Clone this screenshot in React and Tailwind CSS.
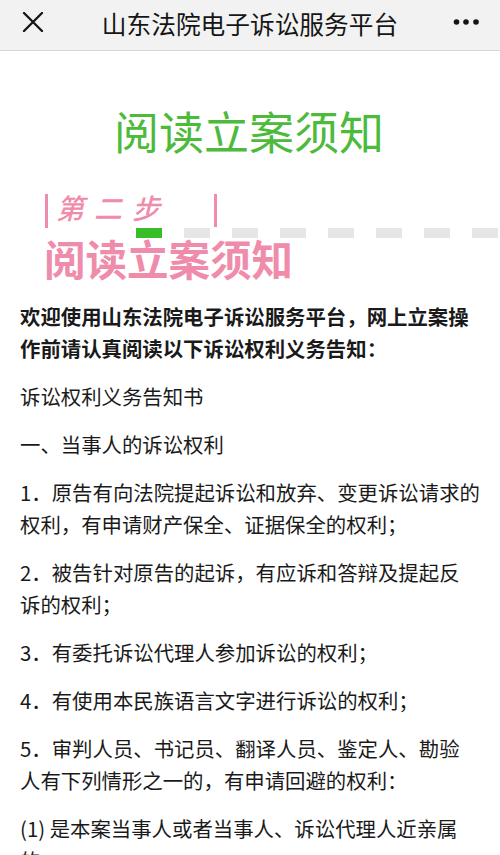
import React from "react";

const paras = [
  { lines: ["欢迎使用山东法院电子诉讼服务平台，网上立案操", "作前请认真阅读以下诉讼权利义务告知："], bold: true },
  { lines: ["诉讼权利义务告知书"] },
  { lines: ["一、当事人的诉讼权利"] },
  { lines: ["1．原告有向法院提起诉讼和放弃、变更诉讼请求的", "权利，有申请财产保全、证据保全的权利；"] },
  { lines: ["2．被告针对原告的起诉，有应诉和答辩及提起反", "诉的权利；"] },
  { lines: ["3．有委托诉讼代理人参加诉讼的权利；"] },
  { lines: ["4．有使用本民族语言文字进行诉讼的权利；"] },
  { lines: ["5．审判人员、书记员、翻译人员、鉴定人、勘验", "人有下列情形之一的，有申请回避的权利："] },
  { lines: ["(1) 是本案当事人或者当事人、诉讼代理人近亲属", "的；"] },
];

export default function App() {
  return (
    <div
      className="w-[500px] h-[855px] overflow-hidden bg-white"
      style={{ fontFamily: '"Noto Sans CJK SC", "Noto Sans", sans-serif' }}
    >
      <header className="relative h-[51px] bg-[#f2f2f2] border-b border-[#d6d6d6] flex items-center justify-center">
        <svg className="absolute left-[22px] top-[12px]" width="22" height="20" viewBox="0 0 22 20">
          <path d="M2 1 L20 19 M20 1 L2 19" stroke="#151515" strokeWidth="2.3" strokeLinecap="round" />
        </svg>
        <h1 className="text-[24.7px] leading-none text-[#151515] -mt-[3px]">山东法院电子诉讼服务平台</h1>
        <svg className="absolute left-[452px] top-[18px]" width="28" height="8" viewBox="0 0 28 8">
          <circle cx="4.5" cy="4" r="2.8" fill="#151515" />
          <circle cx="14" cy="4" r="2.8" fill="#151515" />
          <circle cx="24" cy="4" r="2.8" fill="#151515" />
        </svg>
      </header>

      <h2 className="mt-[57px] text-center text-[45px] leading-[45px] text-[#4cba3a] pr-[2px]">阅读立案须知</h2>

      <div className="mt-[40px] pl-[45px] flex h-[35px]">
        <div className="w-[3px] h-[34px] mt-[1px] bg-[#f08cab]" />
        <div className="ml-[8px] w-[117px] text-[28px] leading-[28px] italic font-medium text-[#f08cab] tracking-[10px] whitespace-nowrap">
          第二步
        </div>
        <div className="ml-[41px] w-[3px] h-[33px] mt-[1px] bg-[#f08cab]" />
      </div>

      <div className="flex gap-[22px] pl-[136px] h-[10px] overflow-hidden">
        <div className="shrink-0 w-[26px] h-[10px] bg-[#36bd27]" />
        {[0, 1, 2, 3, 4, 5, 6].map((i) => (
          <div key={i} className="shrink-0 w-[26px] h-[10px] bg-[#e6e6e6]" />
        ))}
      </div>

      <div className="pl-[44px] text-[41.5px] leading-[41px] font-bold text-[#f08cab] whitespace-nowrap">
        阅读立案须知
      </div>

      <div className="mt-[21px] px-[20px] flex flex-col gap-[16px] text-[20.4px] leading-[32px] text-[#1a1a1a]">
        {paras.map((p, i) => (
          <p key={i} className={(p.bold ? "font-semibold " : "") + "whitespace-nowrap"}>
            {p.lines.map((l, j) => (
              <React.Fragment key={j}>
                {j > 0 && <br />}
                {l}
              </React.Fragment>
            ))}
          </p>
        ))}
      </div>
    </div>
  );
}
